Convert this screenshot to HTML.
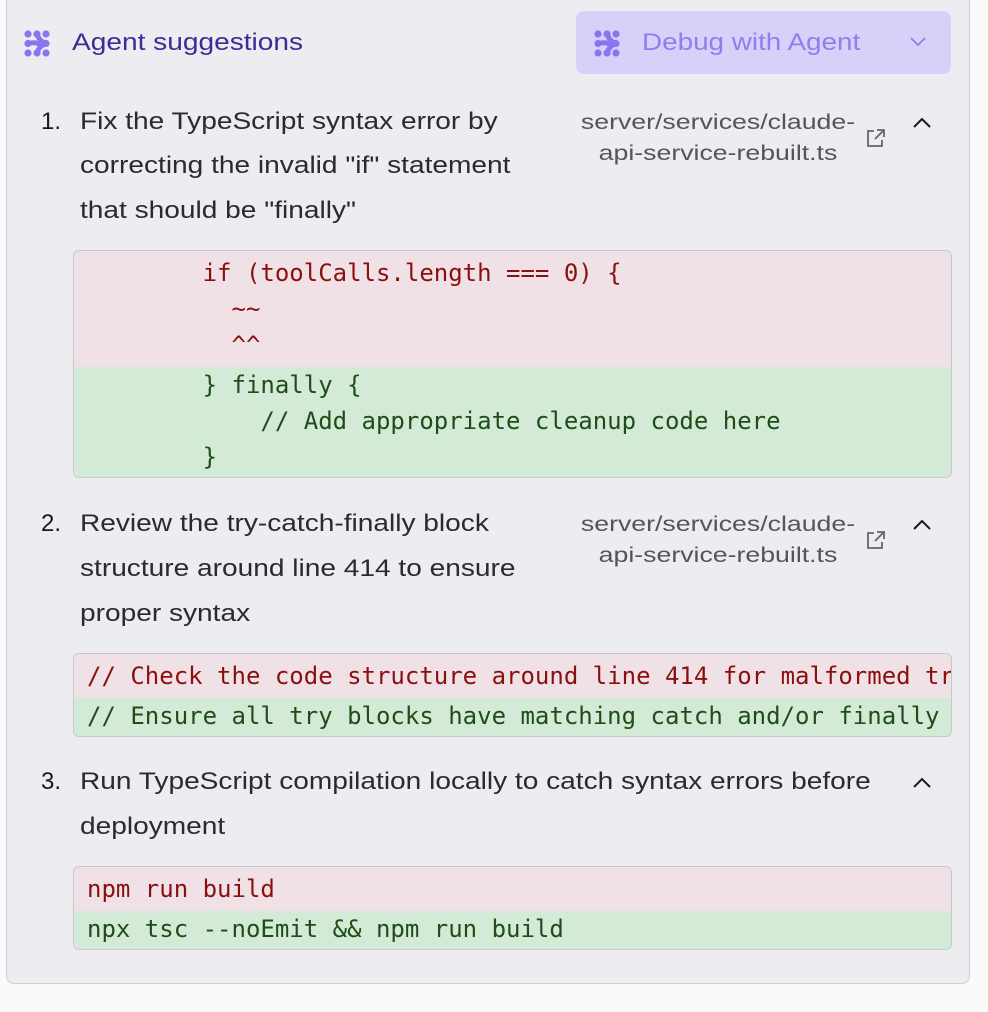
<!DOCTYPE html>
<html><head><meta charset="utf-8"><style>
html,body{margin:0;padding:0;background:#fafafa;width:988px;height:1012px;overflow:hidden;position:relative;font-family:"Liberation Sans",sans-serif}
.panel{position:absolute;left:6px;top:-10px;width:962px;height:992px;background:#ececf1;border:1px solid #cfcfd4;border-radius:8px}
.a{position:absolute;white-space:nowrap}
.s{transform-origin:0 50%;transform:scaleX(1.17)}
.t{font-size:24px;color:#2b2b2b;line-height:44px}
.num{font-size:24px;color:#1a1a1a;line-height:44px}
.f{font-size:21px;color:#555;line-height:31px;text-align:center;width:290px;transform-origin:50% 50%;transform:scaleX(1.27)}
.code{position:absolute;left:73px;width:877px;border:1px solid #c6c6cc;border-radius:6px;overflow:hidden;font-family:"DejaVu Sans Mono","Liberation Mono",monospace;font-size:24px;white-space:pre}
.r{background:#efe1e5;color:#8a1010;padding:4px 0 4px 13px;line-height:36px}
.g{background:#d3ebd6;color:#1f4d1a;padding:0 0 2px 13px;line-height:36px}
</style></head><body>
<div class="panel"></div>
<svg class="a" style="left:24px;top:30px" width="26" height="27" viewBox="0 0 26 27"><g fill="#8b74f0"><circle cx="4" cy="4" r="3.6"/><circle cx="13" cy="4" r="3.6"/><circle cx="22" cy="4" r="3.6"/><circle cx="4" cy="13.5" r="3.6"/><circle cx="22" cy="13.5" r="3.6"/><circle cx="4" cy="23" r="3.6"/><circle cx="13" cy="23" r="3.6"/><circle cx="22" cy="23" r="3.6"/></g><g stroke="#8b74f0" stroke-width="5" fill="none" stroke-linecap="round"><path d="M13 4 Q15 11 22 13.5 M13 23 Q15 16 22 13.5 M4 13.5 Q11 12 14 13.5"/></g></svg>
<div class="a s" style="left:72px;top:26px;font-size:24px;color:#3a2e96;line-height:34px">Agent suggestions</div>
<div class="a" style="left:576px;top:11px;width:375px;height:63px;background:#d7d1fa;border-radius:8px"></div>
<svg class="a" style="left:594px;top:30px" width="26" height="27" viewBox="0 0 26 27"><g fill="#8b74f0"><circle cx="4" cy="4" r="3.6"/><circle cx="13" cy="4" r="3.6"/><circle cx="22" cy="4" r="3.6"/><circle cx="4" cy="13.5" r="3.6"/><circle cx="22" cy="13.5" r="3.6"/><circle cx="4" cy="23" r="3.6"/><circle cx="13" cy="23" r="3.6"/><circle cx="22" cy="23" r="3.6"/></g><g stroke="#8b74f0" stroke-width="5" fill="none" stroke-linecap="round"><path d="M13 4 Q15 11 22 13.5 M13 23 Q15 16 22 13.5 M4 13.5 Q11 12 14 13.5"/></g></svg>
<div class="a s" style="left:642px;top:26px;font-size:24px;color:#8f7ef0;line-height:34px;transform:scaleX(1.16)">Debug with Agent</div>
<svg class="a" style="left:909px;top:36px" width="18" height="12" viewBox="0 0 18 12"><path d="M2 2 L9 9 L16 2" stroke="#8f7ef0" stroke-width="1.8" fill="none"/></svg>

<div class="a num" style="left:41px;top:100px">1.</div>
<div class="a t s" style="left:80px;top:100px">Fix the TypeScript syntax error by</div>
<div class="a t s" style="left:80px;top:144px">correcting the invalid "if" statement</div>
<div class="a t s" style="left:80px;top:189px">that should be "finally"</div>
<div class="a f" style="left:573px;top:107px">server/services/claude-<br>api-service-rebuilt.ts</div>
<svg class="a" style="left:865px;top:127px" width="22" height="22" viewBox="0 0 22 22"><path d="M9 4 H3 V19 H17 V13 M12 3 H19 V10 M19 3 L10 12" stroke="#666" stroke-width="1.8" fill="none"/></svg>
<svg class="a" style="left:912px;top:116px" width="20" height="14" viewBox="0 0 20 14"><path d="M2 11 L10 3 L18 11" stroke="#1a1a1a" stroke-width="2" fill="none"/></svg>
<div class="code" style="top:250px"><div class="r">        if (toolCalls.length === 0) {
          ~~
          ^^</div><div class="g">        } finally {
            // Add appropriate cleanup code here
        }</div></div>

<div class="a num" style="left:41px;top:502px">2.</div>
<div class="a t s" style="left:80px;top:502px">Review the try-catch-finally block</div>
<div class="a t s" style="left:80px;top:547px">structure around line 414 to ensure</div>
<div class="a t s" style="left:80px;top:592px">proper syntax</div>
<div class="a f" style="left:573px;top:509px">server/services/claude-<br>api-service-rebuilt.ts</div>
<svg class="a" style="left:865px;top:529px" width="22" height="22" viewBox="0 0 22 22"><path d="M9 4 H3 V19 H17 V13 M12 3 H19 V10 M19 3 L10 12" stroke="#666" stroke-width="1.8" fill="none"/></svg>
<svg class="a" style="left:912px;top:518px" width="20" height="14" viewBox="0 0 20 14"><path d="M2 11 L10 3 L18 11" stroke="#1a1a1a" stroke-width="2" fill="none"/></svg>
<div class="code" style="top:653px"><div class="r">// Check the code structure around line 414 for malformed try</div><div class="g">// Ensure all try blocks have matching catch and/or finally</div></div>

<div class="a num" style="left:41px;top:760px">3.</div>
<div class="a t s" style="left:80px;top:760px">Run TypeScript compilation locally to catch syntax errors before</div>
<div class="a t s" style="left:80px;top:805px">deployment</div>
<svg class="a" style="left:912px;top:776px" width="20" height="14" viewBox="0 0 20 14"><path d="M2 11 L10 3 L18 11" stroke="#1a1a1a" stroke-width="2" fill="none"/></svg>
<div class="code" style="top:866px"><div class="r">npm run build</div><div class="g">npx tsc --noEmit &amp;&amp; npm run build</div></div>
</body></html>
